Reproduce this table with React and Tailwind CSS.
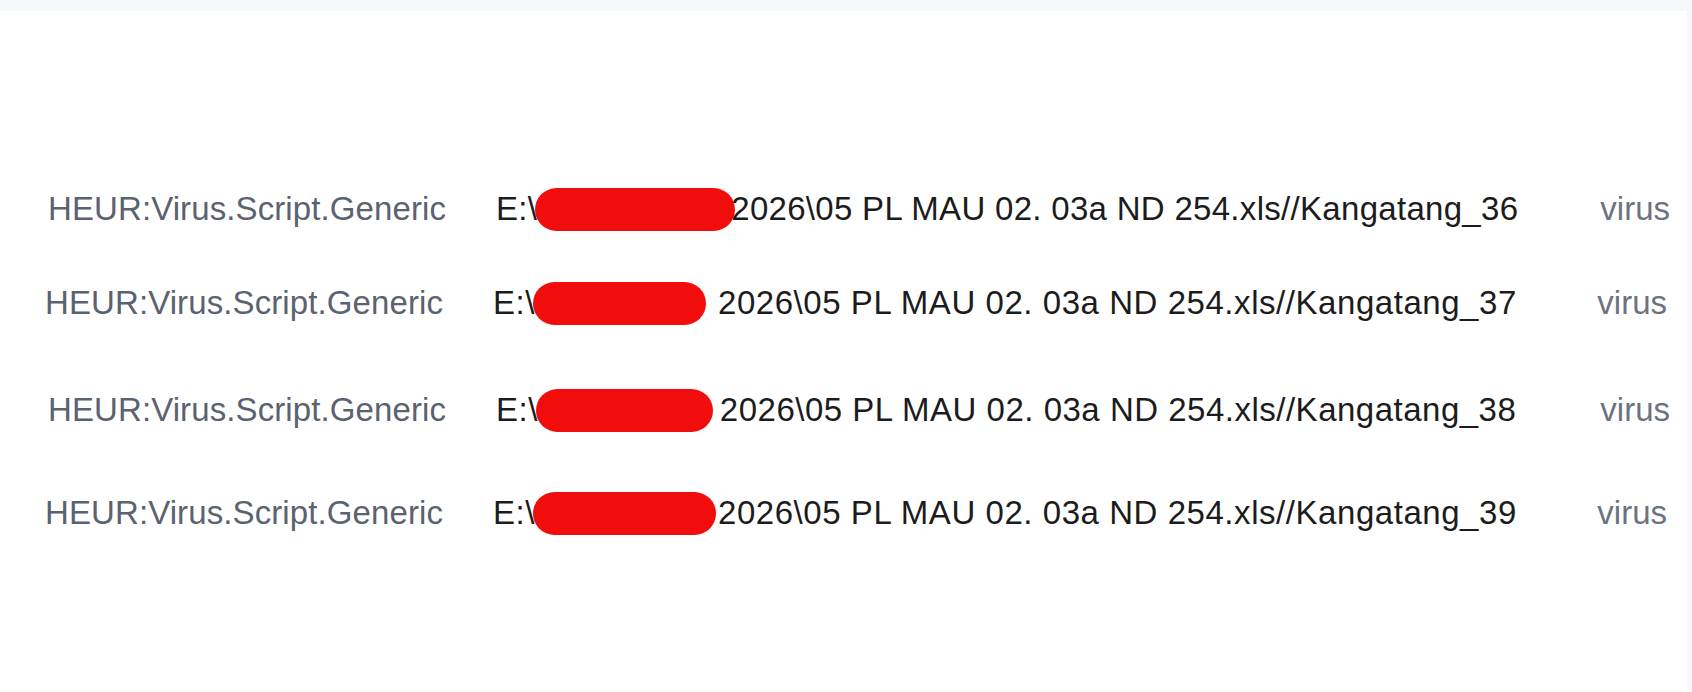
import React from 'react';

const rows = [
    { n: 36, h: 'h-[94px]', first: 'mt-[176px]', left: 'ml-[48px]', blob: 'w-[200px]', gap: '-mr-[4px]', track: 'tracking-[0.3px]', right: 'mr-[17px]' },
    { n: 37, h: 'h-[107px]', first: '', left: 'ml-[45px]', blob: 'w-[173px]', gap: 'mr-[12px]', track: 'tracking-[0.55px]', right: 'mr-[20px]' },
    { n: 38, h: 'h-[103px]', first: '', left: 'ml-[48px]', blob: 'w-[177px]', gap: 'mr-[7px]', track: 'tracking-[0.5px]', right: 'mr-[17px]' },
    { n: 39, h: 'h-[100px]', first: '', left: 'ml-[45px]', blob: 'w-[183px]', gap: 'mr-[2px]', track: 'tracking-[0.55px]', right: 'mr-[20px]' },
];

const App = () => {
    return (
        <div className="w-[1692px] h-[692px] bg-white flex flex-col overflow-hidden" style={{ fontFamily: '"Liberation Sans", Arial, sans-serif' }}>
            <div className="h-[11px] bg-[#f7f8fc] shrink-0" />
            <div className="flex flex-1">
                <div className="flex-1 flex flex-col">
                    {rows.map((r) => (
                        <div key={r.n} className={`${r.h} ${r.first} flex items-start shrink-0`}>
                            <div className={`flex items-center h-[44px] ${r.left}`}>
                                <span className="w-[448px] text-[33px] text-[#5b6270] tracking-[0.1px] whitespace-nowrap">HEUR:Virus.Script.Generic</span>
                                <span className={`text-[33px] text-[#1c1c1c] ${r.track} whitespace-nowrap flex items-center`}>
                                    E:\
                                    <span className={`${r.blob} ${r.gap} h-[43px] -ml-[2px] rounded-full bg-[#f20d0d] inline-block shrink-0`} />
                                    {`2026\\05 PL MAU 02. 03a ND 254.xls//Kangatang_${r.n}`}
                                </span>
                            </div>
                            <span className={`ml-auto ${r.right} h-[44px] flex items-center text-[33px] text-[#6b7380]`}>virus</span>
                        </div>
                    ))}
                </div>
                <div className="w-[5px] bg-[#f7f8fc]" />
            </div>
        </div>
    );
};

export default App;
